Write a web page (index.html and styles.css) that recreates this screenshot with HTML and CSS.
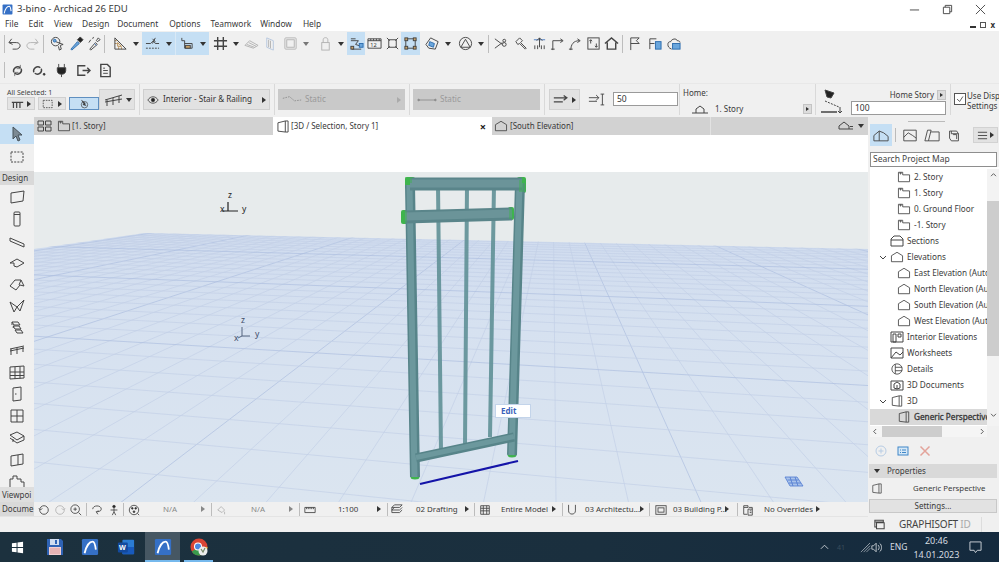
FILE: index.html
```html
<!DOCTYPE html>
<html lang="en">
<head>
<meta charset="utf-8">
<title>3-bino - Archicad 26 EDU</title>
<link rel="stylesheet" href="styles.css">
</head>
<body>
<svg class="defs" width="0" height="0" aria-hidden="true">
  <symbol id="story" viewBox="0 0 16 14"><path d="M1.500 12.500V1.500h5v3h8v8z"/><path d="M3.500 1.500v2h1v-2"/></symbol>
  <symbol id="elev" viewBox="0 0 16 14"><path d="M1.500 12.500V5.500L8 1.500l6.500 4v7z"/></symbol>
  <symbol id="archi" viewBox="0 0 20 20"><rect x="1" y="1" width="18" height="18" rx="1.500" fill="#3570c6" stroke="none"/><path d="M4 17C6 8 10 4 13 4c2 0 3 5 3.500 9" fill="none" stroke="#fff" stroke-width="2"/></symbol>
</svg>

<header class="titlebar">
  <svg class="app-ic" viewBox="0 0 20 20"><use href="#archi"/></svg>
  <span class="title-text">3-bino - Archicad 26 EDU</span>
  <div class="winctl">
    <svg class="wc" viewBox="0 0 12 12"><path d="M1 6.500h10"/></svg>
    <svg class="wc" viewBox="0 0 12 12"><path d="M1.500 3.500h7v7h-7zM3.500 3.500v-2h7v7h-2"/></svg>
    <svg class="wc" viewBox="0 0 12 12"><path d="M1 1l10 10M11 1L1 11"/></svg>
  </div>
</header>
<nav class="menubar">
  <span class="m-file">File</span><span class="m-edit">Edit</span><span class="m-view">View</span><span class="m-design">Design</span><span class="m-doc">Document</span><span class="m-opt">Options</span><span class="m-team">Teamwork</span><span class="m-win">Window</span><span class="m-help">Help</span>
  <div class="subctl"><i class="sub-min"></i><i class="sub-max"></i><i class="sub-x">x</i></div>
</nav>

<section class="tools">
  <div class="tbrow">
    <i class="vs ml4"></i>
    <span class="tb"><svg viewBox="0 0 16 16"><path d="M5 3L2 7l4 2M2.500 7H10c3 0 4 2 4 3.500S12 14 10 14H6"/></svg></span>
    <span class="tb off"><svg viewBox="0 0 16 16"><path d="M11 3l3 4-4 2M13.500 7H6c-3 0-4 2-4 3.500S4 14 6 14h4"/></svg></span>
    <i class="vs ml2"></i>
    <span class="tb ml4"><svg viewBox="0 0 16 16"><circle cx="6" cy="6" r="4.500"/><path d="M6 6l8 3-3 1 1 4-2 1-1-4"/><circle cx="5" cy="5" r="1.500" class="fbl"/></svg></span>
    <span class="tb ml1"><svg viewBox="0 0 16 16"><path d="M2 14l7-8 2 2-8 7z" class="fbl"/><path d="M9 4l3-3 3 3-3 3z" class="fd"/></svg></span>
    <span class="tb"><svg viewBox="0 0 16 16"><path d="M3 14l6-7 2 2-7 6zM10 5l2-3 2 2-3 2zM2 7l2-3M6 3l1-2"/><path d="M8 8l2 2" class="bl"/></svg></span>
    <i class="vs ml1"></i>
    <span class="tb ml6"><svg viewBox="0 0 16 16"><path d="M5 11V7l4 4zM2 5h2M2 8h2M6 14v-2M9 14v-2" class="or"/><path d="M2 14V2l12 12z"/></svg></span>
    <span class="ar"></span>
    <span class="grp"><span class="tb w20"><svg viewBox="0 0 16 16"><path d="M1 8h5l3-3 2 3h4"/><path d="M1 13h14" class="dash"/><path d="M11 2l-3 6M8 3l3 3"/></svg></span><span class="ar"></span></span>
    <span class="grp w34"><span class="tb w20"><svg viewBox="0 0 16 16"><path d="M3 2v3h3v8h8V8H6"/><rect x="7" y="10" width="5" height="3" class="fb"/></svg></span><span class="ar w14"></span></span>
    <span class="tb ml2"><svg viewBox="0 0 16 16"><path d="M1 5h14M1 11h14M5 1v14M11 1v14" class="thick"/></svg></span>
    <span class="ar"></span>
    <span class="tb off"><svg viewBox="0 0 16 16"><path d="M1 10l5-5 9 5-5 3z"/><path d="M3 9l8 3M5 7l8 4"/></svg></span>
    <span class="tb off ml1"><svg viewBox="0 0 16 16"><path d="M4 2l7 3v10l-7-3z" class="bl"/><path d="M6 4v8M8 5v8"/></svg></span>
    <span class="tb off ml2"><svg viewBox="0 0 16 16"><rect x="2" y="2" width="12" height="12" rx="1"/><rect x="4" y="4" width="8" height="8"/></svg></span>
    <span class="ar gray"></span>
    <span class="tb off ml4"><svg viewBox="0 0 16 16"><rect x="4" y="7" width="8" height="8"/><path d="M5.500 7V4c0-3 5-3 5 0v3"/></svg></span>
    <span class="ar"></span>
    <span class="tb on"><svg viewBox="0 0 16 16"><path d="M2 5h8l-3 4 6 2M3 14h10M2 3h5"/><rect x="11" y="8" width="4" height="4" class="fbl"/><rect x="2" y="11" width="3" height="3" class="fb"/></svg></span>
    <span class="tb"><svg viewBox="0 0 16 16"><path d="M1 3h14v10H1zM1 5h14"/><path d="M4 3v2M7 3v2M10 3v2M13 3v2"/><text x="3.500" y="12" class="ictxt">12</text></svg></span>
    <span class="tb"><svg viewBox="0 0 16 16"><path d="M4 4h8v8H4zM2 2l3 3M14 2l-3 3M2 14l3-3M14 14l-3-3"/></svg></span>
    <span class="tb on w19"><svg viewBox="0 0 16 16"><rect x="3" y="3" width="10" height="10"/><rect x="2" y="2" width="3" height="3" class="fb"/><rect x="11" y="2" width="3" height="3" class="fb"/><rect x="2" y="11" width="3" height="3" class="fb"/><rect x="11" y="11" width="3" height="3" class="fb"/></svg></span>
    <span class="tb ml3"><svg viewBox="0 0 16 16"><path d="M1 9l5-7 8 4-3 8-7-1z"/><path d="M5 6l5 2-1 4-5-2z" class="fbl"/></svg></span>
    <span class="ar"></span>
    <span class="tb ml2"><svg viewBox="0 0 16 16"><circle cx="8" cy="8" r="6.500"/><path d="M8 3.500L13 12H3z"/></svg></span>
    <span class="ar"></span>
    <i class="vs ml1"></i>
    <span class="tb ml2"><svg viewBox="0 0 16 16"><path d="M2 3l8 6M2 13l8-6"/><circle cx="12" cy="9" r="2"/><circle cx="12" cy="5" r="1.500"/></svg></span>
    <span class="tb ml3"><svg viewBox="0 0 16 16"><path d="M2 6l4-4 3 3-2 2 6 6-1 1-6-6-2 1z"/></svg></span>
    <span class="tb"><svg viewBox="0 0 16 16"><path d="M2 4h12" class="bl"/><path d="M8 12V2M5 5l3-3 3 3M3 14v-4M6 14v-4M10 14v-4M13 14v-4"/></svg></span>
    <span class="tb"><svg viewBox="0 0 16 16"><path d="M3 15V5h10M11 3l3 2-3 2M1 14h4"/></svg></span>
    <span class="tb"><svg viewBox="0 0 16 16"><path d="M3 15c0-6 3-10 9-10M10 3l3 2-3 2M1 14h4"/></svg></span>
    <span class="tb"><svg viewBox="0 0 16 16"><rect x="2" y="2" width="12" height="12"/><path d="M5 8V4M3.500 5.500L5 4l1.500 1.500M11 8v4M9.500 10.500L11 12l1.500-1.500"/></svg></span>
    <span class="tb"><svg viewBox="0 0 16 16"><path d="M1 8l7-6 7 6M3.500 7v7h9V7" class="thick"/></svg></span>
    <i class="vs ml2"></i>
    <span class="tb ml2"><svg viewBox="0 0 16 16"><path d="M4 15V2h9l-3 3 3 3H4"/></svg></span>
    <span class="tb ml2"><svg viewBox="0 0 16 16"><path d="M3 14V3h7M3 8h5"/><rect x="9" y="6" width="6" height="8" class="fbl"/></svg></span>
    <span class="tb ml1"><svg viewBox="0 0 16 16"><path d="M2 9c0-2 1-3 3-3 1-3 6-4 7-1 2 0 3 1 3 2"/><path d="M2 9c0 2 1 4 4 5"/><rect x="7" y="8" width="8" height="6" class="fbl"/></svg></span>
  </div>
  <div class="tbrow row2">
    <i class="vs ml4"></i>
    <span class="tb ml3"><svg viewBox="0 0 16 16"><path d="M4 10a4.500 4.500 0 0 1 7-5M12 6a4.500 4.500 0 0 1-7 5" class="thick"/><path d="M11 2v4H7M5 14v-4h4" class="thin"/></svg></span>
    <span class="tb ml3"><svg viewBox="0 0 16 16"><path d="M3 10a4.500 4.500 0 0 1 7-5M11 6a4.500 4.500 0 0 1-7 5" class="thick"/><circle cx="14" cy="12" r="1" class="fd"/></svg></span>
    <span class="tb ml5"><svg viewBox="0 0 16 16"><path d="M5 1v4M11 1v4M3.500 5h9v3c0 3-2 4-4.500 4S3.500 11 3.500 8zM8 12v3" class="fd"/></svg></span>
    <span class="tb ml4"><svg viewBox="0 0 16 16"><path d="M10 3H2v10h8M7 8h8M12 5l3 3-3 3" class="thick"/></svg></span>
    <span class="tb ml4"><svg viewBox="0 0 16 16"><path d="M3 1.500h7l3 3v10H3z" class="thick"/><path d="M5.500 8h5M5.500 11h5M5.500 5.500h2"/></svg></span>
  </div>
</section>

<section class="info">
  <div class="sec s1">
    <div class="sel-col">
      <span class="sel-label">All Selected: 1</span>
      <div class="sel-btns">
        <span class="mini"><svg viewBox="0 0 16 12"><path d="M1 4h14M3 4v7M7 4v7M11 4v7" class="thick"/></svg><b class="tri"></b></span>
        <span class="mini"><svg viewBox="0 0 16 12"><rect x="1.500" y="1.500" width="11" height="9" class="dash"/></svg><b class="tri"></b></span>
        <span class="mini active"><svg viewBox="0 0 14 14"><circle cx="7" cy="8" r="4.500"/><path d="M3 2l5 4-1 1 2 2-4-1 1-2z" class="fd"/></svg></span>
      </div>
    </div>
    <span class="big rail"><svg viewBox="0 0 20 14"><path d="M1 7l17-5M1 9l17-3M3 7v6M9 5v7M15 3v7"/></svg><i class="ar"></i></span>
  </div>
  <div class="sec s2"><span class="wide"><svg class="eye" viewBox="0 0 14 10"><path d="M1 5c3-5 9-5 12 0-3 5-9 5-12 0z"/><circle cx="7" cy="5" r="2" class="fd"/></svg><em>Interior - Stair &amp; Railing</em><b class="tri"></b></span></div>
  <div class="sec s3"><span class="wide dim"><svg class="path-ic" viewBox="0 0 24 10"><path d="M1 3l8-2 6 5 8-1" class="dash"/></svg><em>Static</em><b class="tri"></b></span></div>
  <div class="sec s4"><span class="wide dim"><svg class="path-ic" viewBox="0 0 24 10"><path d="M1 5h22"/><circle cx="2" cy="5" r="1" class="fd"/><circle cx="22" cy="5" r="1" class="fd"/></svg><em>Static</em></span></div>
  <div class="sec s5">
    <span class="big arrows"><svg viewBox="0 0 22 12"><path d="M1 4h15M1 9h11M13 1l4 3-4 3" class="thick"/></svg><b class="tri"></b></span>
    <svg class="off-ic" viewBox="0 0 20 14"><path d="M1 5h11M1 9h9M9 2l3 3-3 3M16 1v12M14 1h4M14 13h4"/></svg>
    <span class="field f50">50</span>
  </div>
  <div class="sec s6">
    <span class="home-label">Home:</span>
    <div class="home-row">
      <svg class="home-ic" viewBox="0 0 18 10"><path d="M5 9V5l4-3 4 3v4M1 9h16"/></svg>
      <span class="home-val">1. Story</span>
      <span class="sq"><b class="tri"></b></span>
    </div>
  </div>
  <div class="sec s7">
    <svg class="roof" viewBox="0 0 26 26"><path d="M5 1l9 3-3 5-4-1z" class="fd"/><path d="M5 12l14 6" class="dash"/><path d="M1 23h16" class="thick"/><path d="M20 18v6M18 22l2 2 2-2"/></svg>
    <div class="s7-col">
      <div class="hs"><span>Home Story</span><span class="sq"><b class="tri"></b></span></div>
      <span class="field f100">100</span>
    </div>
  </div>
  <div class="sec s8">
    <span class="chk"><svg viewBox="0 0 12 12"><path d="M2.500 6l3 3 4-6"/></svg></span>
    <span class="usedisp">Use Disp<br>Settings</span>
  </div>
</section>

<div class="work">
  <div class="leftpart">
    <div class="upper">
      <aside class="toolbox">
        <span class="grip"></span>
        <span class="tool sel"><svg viewBox="0 0 16 16"><path d="M4 1v12l3-3 2 5 2-1-2-5h4z" class="fg"/></svg></span>
        <span class="tool t22"><svg viewBox="0 0 16 16"><rect x="2" y="3" width="12" height="10" class="dash"/></svg></span>
        <span class="tool-head">Design</span>
        <span class="tool"><svg viewBox="0 0 16 16"><path d="M2 4l13-2-1 10-12 2z"/></svg></span>
        <span class="tool"><svg viewBox="0 0 16 16"><rect x="5" y="1" width="6" height="14" rx="1"/><path d="M5 3.500h6"/></svg></span>
        <span class="tool"><svg viewBox="0 0 16 16"><path d="M1 5l14 6v3L1 8z"/></svg></span>
        <span class="tool"><svg viewBox="0 0 16 16"><path d="M1 8l7-4 7 4-7 4-3-1V8H1z"/></svg></span>
        <span class="tool"><svg viewBox="0 0 16 16"><path d="M1 9l5-6h6l3 6-4-1-4 5zM12 3l-2 5"/></svg></span>
        <span class="tool"><svg viewBox="0 0 16 16"><path d="M1 4l7 5 7-7-4 11-3-4-3 5z"/></svg></span>
        <span class="tool"><svg viewBox="0 0 16 16"><path d="M3 2h6l2 3H5zM4 6h6l2 3H6zM6 10h6l2 3H8zM3 2v3M5 6l-1 2"/></svg></span>
        <span class="tool"><svg viewBox="0 0 16 16"><path d="M1 7l14-3M1 9l14-3M2 7v6M8 6v6M14 5v5"/></svg></span>
        <span class="tool"><svg viewBox="0 0 16 16"><path d="M1 3l14-1v12l-14 1zM6 3v12M11 2.500v12M1 8h14M1 11.500h14"/></svg></span>
        <span class="tool"><svg viewBox="0 0 16 16"><path d="M4 2l8-1v13l-8 1z"/><path d="M6 8h1.500"/></svg></span>
        <span class="tool"><svg viewBox="0 0 16 16"><path d="M2 2h12v12H2zM8 2v12M2 8h12"/></svg></span>
        <span class="tool"><svg viewBox="0 0 16 16"><path d="M1 5l7-3 7 4-7 4zM1 8l7 5 7-3M4 9v3M15 6v4"/></svg></span>
        <span class="tool"><svg viewBox="0 0 16 16"><path d="M2 4l12-2v10L2 14zM9 3v10"/></svg></span>
        <span class="tool tool-cut"><svg viewBox="0 0 16 16"><path d="M1 15V5h3V2h4v3h4v3h3v7"/></svg></span>
        <span class="tool-head viewp">Viewpoi</span>
      </aside>

      <main class="center">
        <div class="tabs">
          <span class="tab first">
            <svg class="tabgrid" viewBox="0 0 15 12"><path d="M1 1h5.500v4H1zM8.500 1H14v4H8.500zM1 7h5.500v4H1zM8.500 7H14v4H8.500z"/></svg>
            <svg class="tabic ml5" viewBox="0 0 16 14"><use href="#story"/></svg>
            <span class="tabt">[1. Story]</span>
          </span>
          <span class="tab current">
            <svg class="tabic3" viewBox="0 0 13 14"><path d="M1 3l8-2v12l-8-1zM9 1h3v12H9"/></svg>
            <span class="tabt">[3D / Selection, Story 1]</span>
            <span class="tabx">×</span>
          </span>
          <span class="tab third">
            <svg class="tabic" viewBox="0 0 16 14"><use href="#elev"/></svg>
            <span class="tabt">[South Elevation]</span>
          </span>
          <span class="tab rest">
            <svg class="cloud" viewBox="0 0 16 10"><path d="M1 8V5l5-4 5 4v3zM11 8h4M12 5.500h3"/></svg>
            <i class="ar"></i>
          </span>
        </div>
        <div class="viewport">
          <svg class="scene" viewBox="34 135 834 367" preserveAspectRatio="none">
            <defs>
              <clipPath id="groundclip"><polygon points="34,249 145,233 868,249 868,502 34,502"/></clipPath>
              <linearGradient id="groundfill" x1="0" y1="0" x2="0" y2="1"><stop offset="0" stop-color="#d0dcef"/><stop offset=".35" stop-color="#d6e1f0"/><stop offset="1" stop-color="#dbe5f0"/></linearGradient>
            </defs>
            <rect x="34" y="135" width="834" height="37" fill="#fff"/>
            <rect x="34" y="172" width="834" height="330" fill="#e7ebec"/>
            <polygon points="34,249 145,233 868,249 868,502 34,502" fill="url(#groundfill)"/>
            <g id="grid" clip-path="url(#groundclip)"></g>

            <g class="axis">
              <path d="M228 202v9M224 211h14M224 211h-2"/>
              <text x="228" y="198">z</text><text x="242" y="212">y</text><text x="220" y="212">x</text>
            </g>
            <g class="axis axis2">
              <path d="M242 327v9M242 336h8M242 336l-4 2"/>
              <text x="241" y="323">z</text><text x="255" y="337">y</text><text x="234" y="341">x</text>
            </g>

            <polygon class="gridmark" points="785,477 797,477 803,486 790,486"/>
            <path class="gridmark-l" d="M787.500 480h11M789 483h12M790 477l3 9M795 477l3 9"/>

            <g class="bal">
              <path d="M438 185L441 452M467 185L465 445M494 185L490 437"/>
            </g>
            <g class="hot">
              <rect x="405" y="177" width="10" height="12" rx="2"/>
              <rect x="517" y="177" width="9" height="16" rx="2"/>
              <rect x="401" y="210" width="7" height="14" rx="2"/>
              <rect x="508" y="207" width="6" height="13" rx="2"/>
              <rect x="413" y="453" width="6" height="10" rx="2"/>
              <rect x="508" y="433" width="8" height="9" rx="2"/>
              <ellipse cx="415" cy="477" rx="4.500" ry="2.500"/>
              <ellipse cx="512" cy="455" rx="4.500" ry="2.500"/>
            </g>
            <g class="pipe">
              <path class="pd" d="M410 185L415 477M520 183L512 455"/>
              <path class="pl" d="M409.500 185L414.500 477M519.500 183L511.500 455"/>
            </g>
            <g class="pipe">
              <path class="pd r13" d="M410 184L522 184M405 217L512 214"/>
              <path class="pl r7" d="M410 183.500L522 183.500M405 216.500L512 213.500"/>
              <path class="pd r9" d="M416 458L514 437"/>
              <path class="pl r4" d="M416 457.500L514 436.500"/>
            </g>
            <g class="hot soft">
              <rect x="405" y="177" width="7" height="6"/>
              <rect x="519" y="180" width="6" height="12"/>
              <rect x="402" y="211" width="5" height="12"/>
              <rect x="509" y="208" width="4" height="11"/>
            </g>
            <path class="blueline" d="M420 484L518 461"/>
          </svg>
          <span class="edit-tip">Edit</span>
        </div>
      </main>
    </div>
    <footer class="status">
      <div class="st-row">
        <span class="st-head">Docume</span>
        <span class="st st1">
          <svg class="si" viewBox="0 0 14 14"><circle cx="7" cy="7" r="5"/><path d="M1 5l2 2 2-2"/></svg>
          <svg class="si off" viewBox="0 0 14 14"><circle cx="7" cy="7" r="5"/><path d="M13 5l-2 2-2-2"/></svg>
          <svg class="si" viewBox="0 0 14 14"><circle cx="6" cy="6" r="5"/><path d="M10 10l3 3M4 6h4M6 4v4"/></svg>
        </span>
        <span class="st st2">
          <svg class="si" viewBox="0 0 14 14"><path d="M2 6c0-5 10-5 10 0 0 3-5 3-5 3"/><path d="M8 12l-2-3 3-1"/></svg>
          <svg class="si" viewBox="0 0 14 14"><circle cx="7" cy="3" r="1.500" class="fd"/><path d="M7 5v4M3 7h8M7 9l-2 4M7 9l2 4"/></svg>
        </span>
        <span class="st st3"><svg class="si" viewBox="0 0 14 14"><circle cx="7" cy="7" r="5.500"/><circle cx="5" cy="5" r="1" class="fd"/><circle cx="9" cy="5" r="1" class="fd"/><circle cx="7" cy="9" r="1" class="fd"/><path d="M11 11l2 2"/></svg><u class="na">N/A</u><b class="tri lt"></b></span>
        <span class="st st3"><svg class="si off" viewBox="0 0 14 14"><path d="M2 7l4-4 4 4-3 3zM10 9v3"/></svg><u class="na">N/A</u><b class="tri lt"></b></span>
        <span class="st st4"><svg class="si" viewBox="0 0 14 14"><path d="M1 4h12v6H1zM3 4v2M5 4v2M7 4v2M9 4v2M11 4v2"/></svg><u class="val">1:100</u><b class="tri"></b></span>
        <span class="st st5"><svg class="si" viewBox="0 0 14 14"><path d="M1 4l3-3h9l-3 3zM1 4v3l3-3M1 7h9l3-3M1 7v3h9l3-3"/></svg><u class="val">02 Drafting</u><b class="tri"></b></span>
        <span class="st st6"><svg class="si" viewBox="0 0 14 14"><path d="M2 2h10v10H2zM2 5h10M2 8h10M5 2v10M9 2v10"/></svg><u class="val">Entire Model</u><b class="tri"></b></span>
        <span class="st st7"><svg class="si" viewBox="0 0 14 14"><path d="M3 1v7c0 5 8 5 8 0V1"/></svg><u class="val">03 Architectu...</u><b class="tri"></b></span>
        <span class="st st8"><svg class="si" viewBox="0 0 14 14"><rect x="1" y="2" width="12" height="10"/><rect x="3.500" y="4.500" width="7" height="5"/></svg><u class="val">03 Building P...</u><b class="tri"></b></span>
        <span class="st st9"><svg class="si" viewBox="0 0 14 14"><path d="M2 2h5v2H2zM2 4v8h4M8 4h4v9H7V6h5M9 8h2M9 10h2"/></svg><u class="val">No Overrides</u><b class="tri"></b></span>
      </div>
    </footer>
  </div>

  <aside class="panel">
    <div class="navtabs">
      <span class="grip2"></span>
      <span class="navicons">
        <span class="nav on"><svg viewBox="0 0 18 14"><path d="M1 13V7l6-5 5 2 5 4v5zM7 2v11"/></svg></span>
        <i class="vs2"></i>
        <span class="nav"><svg viewBox="0 0 18 14"><path d="M2 1h14v12H2zM2 9l5-5 5 3 4 3"/></svg></span>
        <span class="nav"><svg viewBox="0 0 18 14"><path d="M1 13l3-12h4L5 13zM8 3h9v10H5"/></svg></span>
        <span class="nav"><svg viewBox="0 0 18 14"><path d="M4 2h8l2 3v8H6L4 10zM6 2v3h8M8 6h4v5"/></svg></span>
        <span class="menu-btn"><svg viewBox="0 0 12 9"><path d="M1 1h10M1 4.500h10M1 8h10"/></svg><b class="tri"></b></span>
      </span>
    </div>
    <div class="search">Search Project Map</div>
    <div class="treewrap">
      <div class="tree">
        <div class="row lv2"><svg class="ti" viewBox="0 0 16 14"><use href="#story"/></svg><span>2. Story</span></div>
        <div class="row lv2"><svg class="ti" viewBox="0 0 16 14"><use href="#story"/></svg><span>1. Story</span></div>
        <div class="row lv2"><svg class="ti" viewBox="0 0 16 14"><use href="#story"/></svg><span>0. Ground Floor</span></div>
        <div class="row lv2"><svg class="ti" viewBox="0 0 16 14"><use href="#story"/></svg><span>-1. Story</span></div>
        <div class="row lv1"><svg class="ti" viewBox="0 0 14 12"><path d="M1 11V4l3-3h6l3 3v7zM1 5h12"/></svg><span>Sections</span></div>
        <div class="row lv1 open"><svg class="chev" viewBox="0 0 8 6"><path d="M1 1l3 3 3-3"/></svg><svg class="ti" viewBox="0 0 16 14"><use href="#elev"/></svg><span>Elevations</span></div>
        <div class="row lv2"><svg class="ti" viewBox="0 0 16 14"><use href="#elev"/></svg><span>East Elevation (Auto)</span></div>
        <div class="row lv2"><svg class="ti" viewBox="0 0 16 14"><use href="#elev"/></svg><span>North Elevation (Auto)</span></div>
        <div class="row lv2"><svg class="ti" viewBox="0 0 16 14"><use href="#elev"/></svg><span>South Elevation (Auto)</span></div>
        <div class="row lv2"><svg class="ti" viewBox="0 0 16 14"><use href="#elev"/></svg><span>West Elevation (Auto)</span></div>
        <div class="row lv1"><svg class="ti" viewBox="0 0 14 12"><path d="M1 1h12v10H1zM3 3h3v8H3zM8 3h3v3H8z"/></svg><span>Interior Elevations</span></div>
        <div class="row lv1"><svg class="ti" viewBox="0 0 14 12"><path d="M1 1h12v10H1zM1 11l5-6 4 3 3-3"/></svg><span>Worksheets</span></div>
        <div class="row lv1"><svg class="ti" viewBox="0 0 14 14"><circle cx="7" cy="7" r="6"/><path d="M5 1.500v11M5 5h8M5 9h8"/></svg><span>Details</span></div>
        <div class="row lv1"><svg class="ti" viewBox="0 0 14 12"><path d="M1 2h12v9H1zM4 5l3-2 3 2v4l-3 1-3-1zM7 6v4"/></svg><span>3D Documents</span></div>
        <div class="row lv1 open"><svg class="chev" viewBox="0 0 8 6"><path d="M1 1l3 3 3-3"/></svg><svg class="ti" viewBox="0 0 13 14"><path d="M1 3l8-2v12l-8-1zM9 1h3v12H9"/></svg><span>3D</span></div>
        <div class="row lv2 cur"><svg class="ti" viewBox="0 0 13 14"><path d="M1 3l8-2v12l-8-1zM9 1h3v12H9"/></svg><span>Generic Perspective</span></div>
      </div>
      <div class="vscroll"><svg class="sa" viewBox="0 0 8 6"><path d="M1 5l3-3 3 3"/></svg><i class="vthumb"></i><svg class="sa sb" viewBox="0 0 8 6"><path d="M1 1l3 3 3-3"/></svg></div>
    </div>
    <div class="hscroll"><svg class="sl" viewBox="0 0 6 8"><path d="M5 1L2 4l3 3"/></svg><i class="hthumb"></i><svg class="sl" viewBox="0 0 6 8"><path d="M1 1l3 3-3 3"/></svg></div>
    <div class="actions">
      <svg class="act" viewBox="0 0 12 12"><circle cx="6" cy="6" r="5" class="p1"/><path d="M3.500 6h5M6 3.500v5" class="p1"/></svg>
      <svg class="act" viewBox="0 0 12 12"><rect x="1" y="2" width="10" height="8" class="p2"/><path d="M3 5h1M5 5h4M3 7.500h1M5 7.500h4" class="p2"/></svg>
      <svg class="act" viewBox="0 0 12 12"><path d="M1.500 1.500l9 9M10.500 1.500l-9 9" class="p3"/></svg>
    </div>
    <div class="prop-head"><b class="trid"></b>Properties</div>
    <div class="prop-row"><svg class="pi" viewBox="0 0 13 14"><path d="M1 3l8-2v12l-8-1zM9 1h3v12H9"/></svg><span>Generic Perspective</span></div>
    <div class="settings">Settings...</div>
    <div class="idrow"><svg class="idic" viewBox="0 0 13 12"><path d="M1 1h10v2H1zM1 3v6h2M3 4h9v7H3z"/></svg><span class="gs">GRAPHISOFT <span>ID</span></span><i class="idsep"></i></div>
  </aside>
</div>

<footer class="taskbar">
  <span class="task t-win"><svg viewBox="0 0 14 14"><path d="M1 2.500l5-.7v4.700H1zM7 1.600L13 .8v5.700H7zM1 7.500h5v4.700l-5-.7zM7 7.500h6v5.700l-6-.8z" fill="#fff"/></svg></span>
  <span class="task t-save"><svg viewBox="0 0 18 18"><path d="M1 1h14l2 2v14H1z" fill="#2f63b5"/><rect x="4" y="1" width="9" height="6" fill="#cfdcf0"/><rect x="9" y="2" width="2" height="4" fill="#2f63b5"/><rect x="3" y="9" width="12" height="8" fill="#f0cdd0"/><path d="M4 11h10M4 13h10M4 15h10" stroke="#c77" stroke-width=".6"/></svg></span>
  <span class="task t-ac"><svg viewBox="0 0 20 20"><use href="#archi"/></svg></span>
  <span class="task t-word"><svg viewBox="0 0 20 18"><rect x="6" y="1" width="13" height="16" rx="1" fill="#2b7cd3"/><rect x="6" y="9" width="13" height="8" fill="#185abd"/><rect x="1" y="4" width="11" height="11" rx="1" fill="#134a9e"/><text x="2.300" y="12.500" class="wordw">W</text></svg></span>
  <span class="task t-ac2"><svg viewBox="0 0 20 20"><use href="#archi"/></svg></span>
  <span class="task t-chrome"><svg viewBox="0 0 20 20"><circle cx="10" cy="10" r="8.500" fill="#d94535"/><path d="M10 10L2.800 14.500A8.500 8.500 0 0 0 12 18.300z" fill="#3a9a4c"/><path d="M10 10l8.500 0a8.500 8.500 0 0 1-6.500 8.300z" fill="#f0c33a"/><circle cx="9" cy="9.500" r="4" fill="#fff"/><circle cx="9" cy="9.500" r="3" fill="#4a86e0"/><circle cx="14" cy="14" r="4.500" fill="#eee"/><path d="M12 12l2 3 2-4" stroke="#786" stroke-width="1.200" fill="none"/></svg></span>
  <span class="tray">
    <svg class="tr caret" viewBox="0 0 10 6"><path d="M1 5l4-4 4 4"/></svg>
    <span class="t41">41</span>
    <svg class="tr wifi" viewBox="0 0 12 12"><path d="M1 11L11 1M4 11l7-7M7 11l4-4" class="dotted"/></svg>
    <svg class="tr vol" viewBox="0 0 14 12"><path d="M1 4h2l3-3v10L3 8H1zM8 3c2 1 2 5 0 6M10 1c3 2 3 8 0 10"/></svg>
    <span class="eng">ENG</span>
    <span class="clock"><span>20:46</span><span>14.01.2023</span></span>
    <svg class="tr note" viewBox="0 0 14 14"><path d="M1 1h12v9H9l-2 2.500L5.500 10H1z"/></svg>
  </span>
</footer>
<script src="grid.js"></script>
</body>
</html>
```
FILE: styles.css
```css
* { box-sizing: border-box; }
html, body { margin: 0; padding: 0; }
body {
  width: 999px; height: 562px; overflow: hidden; display: flex; flex-direction: column;
  background: #f0f0f0; color: #3a3a3a;
  font: 8px/1 "Noto Sans", "Open Sans", sans-serif;
}
svg { display: block; fill: none; stroke: #444; stroke-width: 1; }
i, em, u, b { font-style: normal; text-decoration: none; font-weight: normal; }
.defs { position: absolute; }
.ml1 { margin-left: 1px; } .ml2 { margin-left: 2px; } .ml3 { margin-left: 3px; }
.ml4 { margin-left: 4px; } .ml5 { margin-left: 5px; } .ml6 { margin-left: 6px; }

/* title + menu */
.titlebar { height: 18px; background: #fff; display: flex; align-items: center; padding-left: 2px; flex: none; }
.app-ic { width: 11px; height: 11px; }
.title-text { margin-left: 4px; font-size: 9.600px; color: #3a3a3a; }
.winctl { margin-left: auto; display: flex; width: 99px; padding-right: 13px; justify-content: space-between; padding-left: 9px; }
.wc { width: 11px; height: 11px; stroke: #444; }
.menubar { height: 13px; background: #fff; display: flex; align-items: center; font-size: 8.400px; color: #3a3a3a; flex: none; padding-left: 5px; }
.m-edit { margin-left: 10.200px; } .m-view { margin-left: 10.400px; } .m-design { margin-left: 9.800px; }
.m-doc { margin-left: 7.700px; } .m-opt { margin-left: 11px; } .m-team { margin-left: 10px; }
.m-win { margin-left: 8.800px; } .m-help { margin-left: 11px; }
.subctl { margin-left: auto; display: flex; gap: 4px; align-items: center; padding-right: 4px; }
.sub-min { width: 6px; height: 2px; background: #333; margin-top: 5px; }
.sub-max { width: 6px; height: 6px; border: 1px solid #555; }
.sub-x { font-weight: bold; font-size: 8px; color: #333; }

/* toolbars */
.tools { height: 52px; flex: none; background: #f0f0f0; }
.tbrow { height: 25px; padding-top: 1px; display: flex; align-items: stretch; }
.row2 { height: 27px; padding-top: 3px; padding-bottom: 2px; }
.vs { width: 1px; background: #bdbdbd; margin-top: 3px; margin-bottom: 3px; flex: none; }
.tb { width: 18px; height: 23px; display: flex; align-items: center; justify-content: center; flex: none; }
.tb svg { width: 15px; height: 15px; }
.w19 { width: 19px; } .w20 { width: 20px; }
.tb.on { background: #c5dff4; }
.off svg { opacity: .35; }
.ar { width: 13px; flex: none; display: flex; align-items: center; justify-content: center; }
.ar::after { content: ""; border: 3px solid transparent; border-top: 4px solid #333; border-bottom: 0; }
.ar.gray::after { border-top-color: #777; }
.w14 { width: 14px; }
.grp { display: flex; width: 33px; background: #c5dff4; flex: none; height: 23px; }
.grp.w34 { width: 34px; border-left: 1px solid #d9e9f6; }
.fb { fill: #caa267; stroke: #444; }
.fbl { fill: #6aa6dc; stroke: #2e6dae; }
.fd { fill: #222; }
.fg { fill: #7d8a93; stroke: #47525a; }
.bl { stroke: #4d7dc0; }
.or { stroke: #b58a4c; }
.thick { stroke-width: 1.500; }
.thin { stroke-width: .7; }
.dash { stroke-dasharray: 2 1.200; }
.ictxt { font: 6px "Noto Sans", sans-serif; fill: #333; stroke: none; }

/* info box */
.info { height: 34px; flex: none; display: flex; background: #f0f0f0; border-top: 1px solid #e8e8e8; }
.sec { border-right: 1px solid #d9d9d9; padding-top: 5px; flex: none; display: flex; margin-bottom: 2px; }
.s1 { width: 140px; padding-left: 7px; }
.s2, .s3, .s4 { width: 135px; padding-left: 3px; }
.s5 { width: 135px; padding-left: 4px; }
.s6 { width: 136px; flex-direction: column; padding-left: 3px; position: relative; }
.s7 { width: 135px; padding-left: 4px; }
.s8 { width: 48px; border-right: 0; padding-left: 3px; padding-top: 9px; }
.sel-col { width: 92px; display: flex; flex-direction: column; }
.sel-label { font-size: 7px; height: 8px; color: #444; }
.sel-btns { display: flex; gap: 3px; margin-top: 0; height: 13px; }
.mini { width: 28px; height: 13px; background: #e4e4e4; border: 1px solid #d0d0d0; display: flex; align-items: center; justify-content: space-around; padding: 0 2px; }
.mini svg { width: 13px; height: 10px; }
.mini.active { width: 30px; background: #c5dff4; border-color: #5f8fc0; justify-content: center; margin-left: 0; }
.tri { width: 0; height: 0; border: 3px solid transparent; border-left: 4px solid #333; border-right: 0; flex: none; display: inline-block; }
.tri.lt { border-left-color: #888; }
.big { height: 21px; background: #e2e2e2; border: 1px solid #d2d2d2; display: flex; align-items: center; flex: none; }
.rail { width: 36px; padding-left: 4px; }
.rail svg { width: 20px; height: 14px; }
.rail .ar { width: 10px; }
.wide { width: 127px; height: 21px; background: #e2e2e2; border: 1px solid #cfcfcf; display: flex; align-items: center; padding: 0 3px 0 3px; font-size: 8.100px; }
.wide em { flex: 1; margin-left: 4px; color: #333; white-space: nowrap; }
.eye { width: 12px; height: 10px; }
.wide.dim { background: #c9c9c9; border-color: #c9c9c9; color: #999; }
.dim em { color: #9a9a9a; margin-left: 3px; }
.dim svg { stroke: #8a8a8a; }
.dim .fd { fill: #888; }
.dim .tri { border-left-color: #aaa; }
.path-ic { width: 20px; height: 10px; }
.arrows { width: 31px; justify-content: center; gap: 1px; }
.arrows svg { width: 18px; height: 11px; }
.off-ic { width: 18px; height: 13px; margin: 4px 0 0 8px; }
.field { background: #fff; border: 1px solid #9a9a9a; font-size: 8.500px; display: flex; align-items: center; padding-left: 3px; color: #333; }
.f50 { width: 65px; height: 14px; margin: 3px 0 0 7px; }
.home-label { font-size: 8px; height: 10px; margin-top: -1px; padding-top: 1px; }
.home-row { display: flex; align-items: center; height: 14px; margin-top: 5px; }
.home-ic { width: 18px; height: 10px; margin-left: 8px; }
.home-val { margin-left: 6px; font-size: 8px; }
.sq { width: 9px; height: 10px; background: #dcdcdc; border: 1px solid #c4c4c4; display: inline-flex; align-items: center; justify-content: center; }
.home-row .sq { margin-left: auto; margin-right: 3px; }
.sq .tri { border-width: 2.500px; border-left-width: 3px; border-right-width: 0; }
.roof { width: 26px; height: 26px; flex: none; margin-left: 0; }
.s7-col { width: 95px; margin-left: 5px; display: flex; flex-direction: column; }
.hs { display: flex; justify-content: flex-end; align-items: center; gap: 3px; height: 11px; font-size: 8px; }
.f100 { height: 14px; margin-top: 1px; }
.chk { width: 12px; height: 12px; border: 1px solid #555; background: #fff; flex: none; }
.chk svg { width: 10px; height: 10px; }
.usedisp { font-size: 8px; line-height: 10px; margin-left: 1px; white-space: nowrap; margin-top: -2px; }

/* workspace */
.work { height: 415px; flex: none; display: flex; }
.leftpart { width: 868px; flex: none; display: flex; flex-direction: column; }
.upper { height: 385px; flex: none; display: flex; }

/* toolbox */
.toolbox { width: 34px; flex: none; background: #f0f0f0; display: flex; flex-direction: column; position: relative; }
.grip { height: 7px; flex: none; }
.tool { height: 21.900px; flex: none; display: flex; align-items: center; justify-content: center; }
.tool svg { width: 16px; height: 16px; flex: none; }
.tool.sel { height: 20px; background: #c5dff4; }
.t22 { height: 26px; }
.tool-head { height: 14px; flex: none; background: #d9d9d9; font-size: 8px; display: flex; align-items: center; padding-left: 2px; margin-top: 1px; margin-bottom: 1px; overflow: hidden; }
.tool-cut { height: 16px; align-items: flex-start; padding-top: 3px; overflow: hidden; }
.viewp { margin: auto 0 0; height: 15px; background: #dedede; }

/* centre */
.center { flex: 1; display: flex; flex-direction: column; min-width: 0; }
.tabs { height: 18px; flex: none; display: flex; background: #d2d2d2; font-size: 8px; }
.tab { display: flex; align-items: center; flex: none; }
.first { width: 239px; padding-left: 3px; }
.current { width: 219px; background: #fff; padding-left: 4px; }
.third { width: 219px; padding-left: 2px; border-right: 1px solid #e2e2e2; }
.rest { flex: 1; padding-left: 127px; }
.rest .ar { width: 14px; margin-left: 0; }
.tabgrid { width: 15px; height: 12px; }
.tabic { width: 14px; height: 12px; }
.tabic3 { width: 12px; height: 13px; }
.tabt { margin-left: 2px; white-space: nowrap; }
.first .tabt { margin-left: 1px; }
.tabx { margin-left: auto; margin-right: 6px; font-size: 11px; font-weight: bold; color: #222; }
.cloud { width: 16px; height: 10px; }
.viewport { flex: 1; position: relative; background: #fff; overflow: hidden; }
.scene { width: 834px; height: 367px; stroke: none; }
#grid line { stroke-width: .7; }
.axis path { stroke: #222; stroke-width: 1.200; }
.axis text { font: 8.500px "Noto Sans", sans-serif; fill: #222; stroke: none; }
.axis2 path { stroke: #55657f; stroke-width: 1; }
.axis2 text { fill: #3e4c68; }
.gridmark { fill: #a8c2ea; stroke: #4f7ad0; stroke-width: .8; }
.gridmark-l { stroke: #4f7ad0; stroke-width: .8; }
.bal path { stroke: #5f9096; stroke-width: 4; opacity: .9; }
.hot rect, .hot ellipse { fill: #3fb44d; stroke: none; }
.hot.soft rect { fill: #3fb44d; opacity: .45; }
.pipe .pd { stroke: #578489; stroke-width: 10; }
.pipe .pl { stroke: #6c989d; stroke-width: 6; }
.pipe .r13 { stroke-width: 13; stroke: #5a858a; }
.pipe .r7 { stroke-width: 8; stroke: #6b9499; }
.pipe .r9 { stroke-width: 9; }
.pipe .r4 { stroke-width: 5; }
.blueline { stroke: #1414a8; stroke-width: 2; }
.edit-tip { position: absolute; left: 461px; top: 269px; width: 36px; height: 14px; background: #fff; border: 1px solid #c3d4ea; font-size: 8px; font-weight: bold; color: #3b62bb; padding: 2px 0 0 5px; }

/* status */
.status { height: 30px; flex: none; background: #f0f0f0; }
.st-row { display: flex; height: 15px; font-size: 7.900px; align-items: stretch; border-bottom: 1px solid #e4e4e4; }
.st-head { width: 34px; flex: none; background: #d9d9d9; display: flex; align-items: center; padding-left: 2px; overflow: hidden; font-size: 8px; }
.st { display: flex; align-items: center; flex: none; border-right: 1px solid #bcbcbc; height: 13px; margin-top: 1px; position: relative; }
.si { width: 12px; height: 12px; flex: none; }
.si.off { opacity: .35; }
.st .tri { position: absolute; right: 6px; top: 3px; }
.st1 { width: 53px; padding-left: 4px; gap: 4px; }
.st2 { width: 37px; padding-left: 4px; gap: 5px; }
.st3 { width: 88px; padding-left: 4px; }
.st4 { width: 88px; padding-left: 4px; }
.st5 { width: 87px; padding-left: 3px; }
.st6 { width: 88px; padding-left: 4px; }
.st7 { width: 87px; padding-left: 3px; }
.st8 { width: 88px; padding-left: 5px; }
.st9 { width: 88px; padding-left: 4px; border-right: 0; }
.na { flex: 1; text-align: center; color: #888; padding-right: 11px; }
.val { margin-left: 10px; white-space: nowrap; }
.st4 .val { margin-left: 22px; }
.st5 .val { margin-left: 13px; }
.st7 .val { margin-left: 7px; }
.st8 .val { margin-left: 6px; }
.st5 .tri, .st7 .tri { right: 5px; }
.st8 .tri { right: 8px; }

/* right panel */
.panel { width: 131px; flex: none; background: #f0f0f0; display: flex; flex-direction: column; }
.navtabs { height: 35px; flex: none; position: relative; padding-top: 7px; }
.grip2 { position: absolute; left: 40px; top: 4px; width: 37px; height: 1px; background: #bbb; }
.navicons { display: flex; padding-left: 2px; height: 22px; align-items: center; }
.nav { width: 22px; height: 22px; display: flex; align-items: center; justify-content: center; flex: none; }
.nav svg { width: 16px; height: 13px; }
.nav.on { background: #c5dff4; }
.vs2 { width: 1px; height: 14px; background: #bbb; margin: 0 3px; }
.menu-btn { width: 25px; height: 16px; margin-left: 8px; background: #e2e2e2; border: 1px solid #d2d2d2; display: flex; align-items: center; justify-content: center; gap: 2px; flex: none; }
.menu-btn svg { width: 11px; height: 9px; }
.search { height: 15px; margin: 0 2px; background: #fff; border: 1px solid #8e8e8e; font-size: 8.500px; display: flex; align-items: center; padding-left: 2px; flex: none; color: #444; }
.treewrap { height: 259px; flex: none; display: flex; margin-left: 2px; padding-top: 2px; background: #fff; }
.tree { width: 117px; flex: none; overflow: hidden; }
.row { height: 16px; display: flex; align-items: center; white-space: nowrap; font-size: 8.200px; color: #3c3c3c; overflow: hidden; position: relative; }
.lv2 { padding-left: 27px; }
.lv1 { padding-left: 20px; }
.ti { width: 14px; height: 12px; flex: none; margin-right: 3px; }
.chev { position: absolute; left: 9px; top: 6px; width: 8px; height: 6px; }
.cur { background: #d9d9d9; }
.cur span { -webkit-text-stroke: .3px #333; }
.vscroll { width: 12px; flex: none; display: flex; flex-direction: column; align-items: center; background: #f3f3f3; position: relative; }
.sa { width: 7px; height: 5px; margin-top: 3px; flex: none; }
.vthumb { width: 12px; height: 155px; background: #cdcdcd; margin-top: 24px; flex: none; }
.sb { margin-top: auto; margin-bottom: 8px; }
.hscroll { height: 11px; flex: none; display: flex; align-items: center; margin-left: 2px; background: #f5f5f5; padding: 0 2px; width: 117px; }
.sl { width: 5px; height: 7px; flex: none; }
.hthumb { width: 60px; height: 11px; background: #cdcdcd; margin: 0 auto 0 5px; }
.actions { height: 27px; flex: none; display: flex; align-items: center; padding-left: 7px; gap: 10px; }
.act { width: 12px; height: 12px; }
.p1 { stroke: #b7cce4; }
.p2 { stroke: #3f86c8; fill: #d6e8f6; }
.p3 { stroke: #e3a39a; stroke-width: 1.500; }
.prop-head { height: 14px; margin: 0 2px 0 1px; background: #d9d9d9; flex: none; display: flex; align-items: center; padding-left: 5px; font-size: 8px; }
.trid { width: 0; height: 0; border: 3px solid transparent; border-top: 4px solid #333; border-bottom: 0; margin-right: 7px; }
.prop-row { height: 21px; flex: none; display: flex; align-items: center; padding-left: 4px; font-size: 7.800px; }
.pi { width: 10px; height: 11px; flex: none; }
.prop-row span { margin-left: 31px; white-space: nowrap; }
.settings { height: 14px; margin: 0 2px 0 1px; flex: none; background: #e2e2e2; border: 1px solid #c8c8c8; display: flex; align-items: center; justify-content: center; font-size: 8px; }
.idrow { flex: 1; display: flex; align-items: center; padding-left: 6px; padding-top: 3px; position: relative; }
.idic { width: 11px; height: 11px; stroke-width: 1.200; }
.gs { margin-left: 14px; font-size: 10px; color: #444; white-space: nowrap; letter-spacing: -.2px; }
.gs span { color: #aaa; }
.idsep { width: 1px; height: 15px; background: #ddd; margin-left: 10px; }

/* taskbar */
.taskbar { height: 30px; flex: none; display: flex; position: relative; background: linear-gradient(90deg, #1c313e 0%, #1a2f3e 60%, #142a3e 100%); color: #d8dde2; }
.task { height: 30px; flex: none; display: flex; align-items: center; justify-content: center; position: relative; }
.task svg { width: 18px; height: 18px; stroke: none; }
.t-win { width: 34px; }
.t-win svg { width: 13px; height: 13px; }
.t-save { width: 34px; margin-left: 4px; }
.t-ac { width: 34px; margin-left: 1px; }
.t-word { width: 34px; margin-left: 2px; }
.t-ac2 { width: 35px; background: #465763; margin-left: 2px; }
.t-ac2::after, .t-chrome::after { content: ""; position: absolute; left: 0; right: 0; bottom: 0; height: 2px; background: #76b9ed; }
.t-chrome { width: 29px; margin-left: 4px; }
.t-chrome svg { width: 20px; height: 20px; }
.tray { margin-left: auto; display: flex; align-items: center; height: 30px; position: relative; width: 182px; padding-left: 3px; }
.tr { stroke: #cfd5da; flex: none; }
.caret { width: 9px; height: 6px; }
.t41 { font-size: 7px; color: #3a4d5c; margin-left: 8px; }
.wifi { width: 11px; height: 11px; margin-left: 15px; }
.dotted { stroke-dasharray: 1 .6; stroke: #e2e6ea; }
.vol { width: 12px; height: 11px; margin-left: 0; }
.eng { font-size: 8.500px; margin-left: 7px; }
.clock { display: flex; flex-direction: column; align-items: center; gap: 5px; font-size: 9px; margin-left: 9px; width: 40px; }
.note { width: 13px; height: 13px; margin-left: 13px; }
.wordw { font: bold 8px "Liberation Sans", sans-serif; fill: #fff; }
```
FILE: grid.js
```js
// Perspective ground grid for the 3D window: two vanishing points, every eighth line stronger.
(function () {
  var NS = "http://www.w3.org/2000/svg";
  var grid = document.getElementById("grid");
  function line(x1, y1, x2, y2, major) {
    var l = document.createElementNS(NS, "line");
    l.setAttribute("x1", x1); l.setAttribute("y1", y1);
    l.setAttribute("x2", x2); l.setAttribute("y2", y2);
    l.setAttribute("stroke", major ? "#aebfe0" : "#c3d0e7");
    grid.appendChild(l);
  }
  var bx = 553, by = 172;
  for (var k = -24; k <= 26; k++) {
    var x = 124 + 72 * k;
    line(bx, by, bx + (x - bx) * 1.1, by + 328 * 1.1, (k % 8) === 0);
  }
  var ax = -2826, ay = 167;
  for (var j = -1; j <= 31; j++) {
    var u = 0.00339 + 0.00042 * j;
    var y = ay + 1 / u;
    var right = ay + (y - ay) * (868 - ax) / (34 - ax);
    line(34, y, 868, right, ((j - 6) % 8) === 0);
  }
})();
```
